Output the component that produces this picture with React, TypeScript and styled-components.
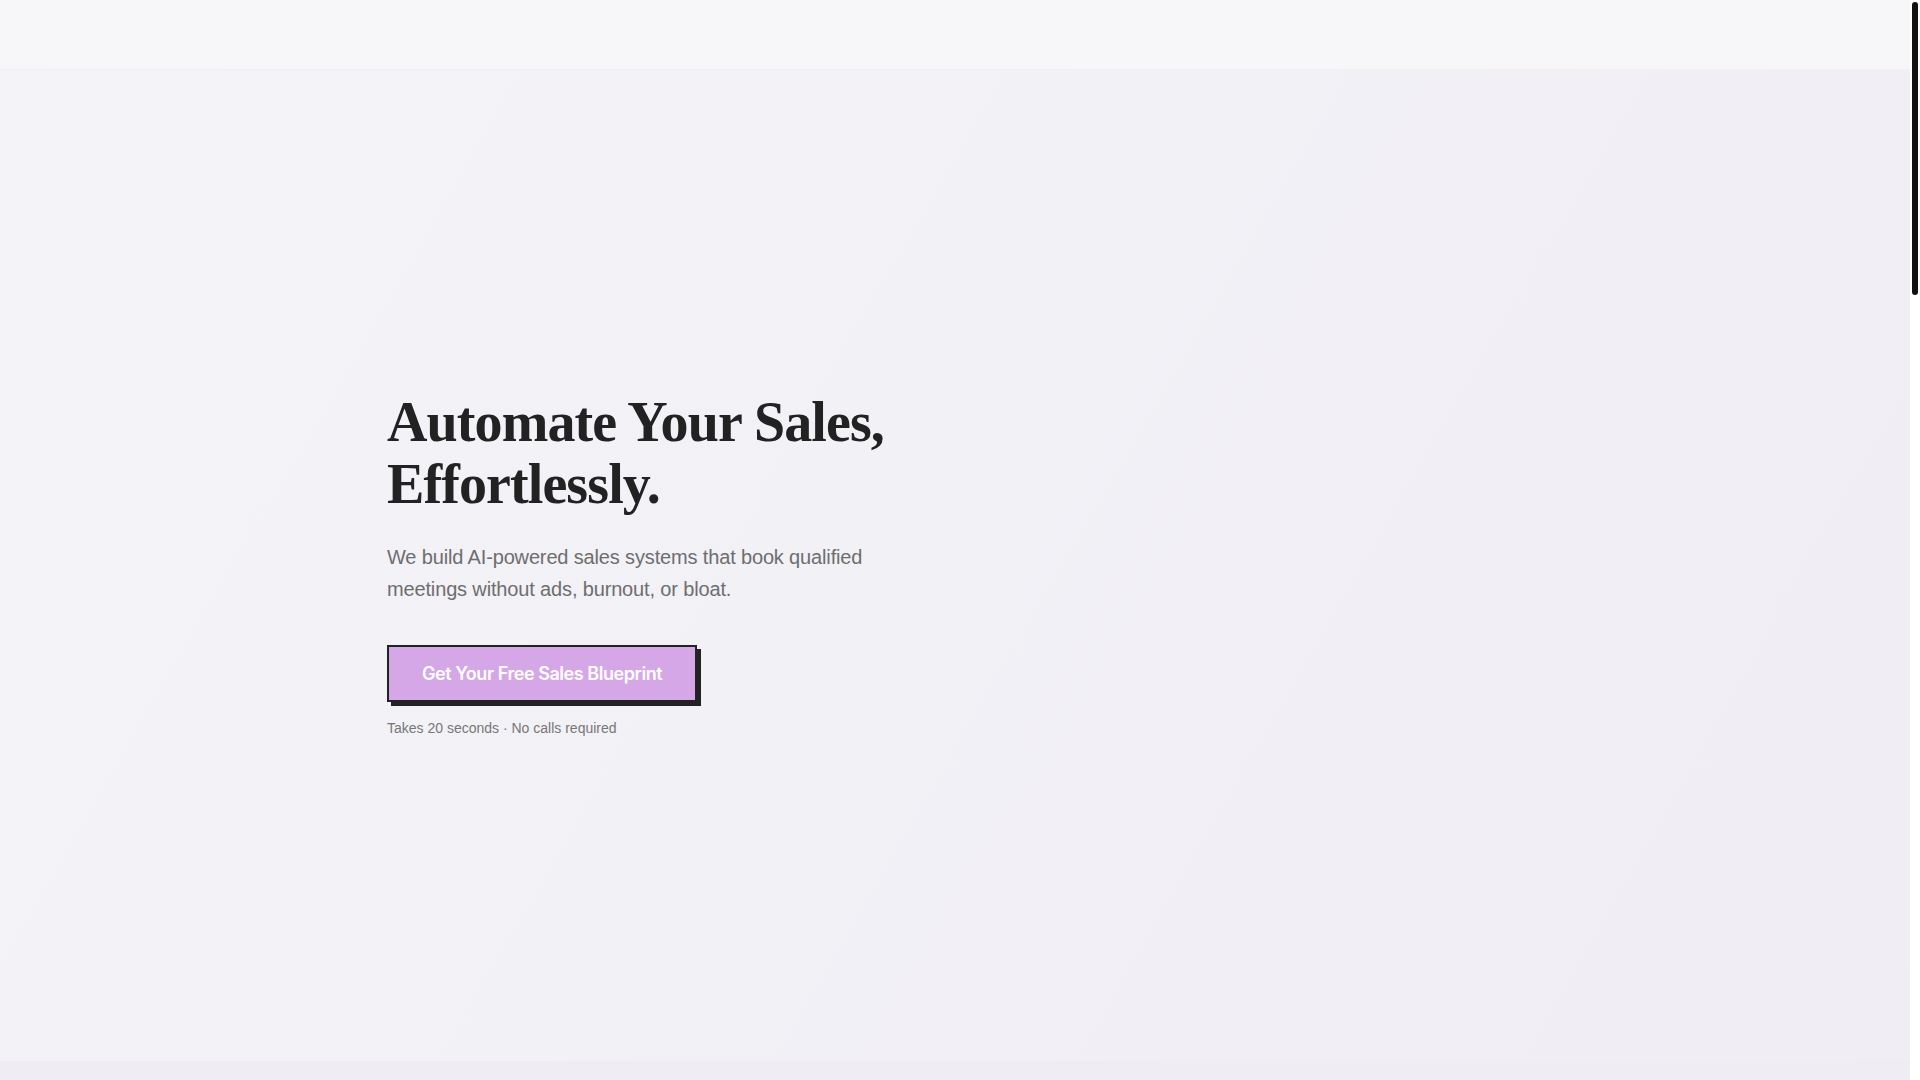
import styled, { createGlobalStyle } from "styled-components";

const GlobalStyle = createGlobalStyle`
  * {
    box-sizing: border-box;
  }
  html,
  body {
    margin: 0;
    padding: 0;
    background: #ffffff;
  }
  body {
    font-family: "Liberation Sans", Arial, sans-serif;
    color: #222222;
  }
`;

const Page = styled.div`
  padding-right: 10px;
`;

const ScrollRail = styled.div`
  position: fixed;
  top: 0;
  right: 0;
  width: 10px;
  height: 100vh;
  background: #ffffff;
  padding: 2px;
`;

const ScrollThumb = styled.div`
  width: 6px;
  height: 293px;
  background: #111111;
  border-radius: 3px;
`;

const Header = styled.header`
  height: 70px;
  background: #f7f7f9;
  border-bottom: 1px solid rgba(20, 20, 40, 0.025);
`;

const Hero = styled.section`
  min-height: 991px;
  display: flex;
  align-items: center;
  background: linear-gradient(120deg, #f4f3f8 0%, #f2f1f6 45%, #f0edf4 100%);
`;

const Container = styled.div`
  width: 100%;
  max-width: 1200px;
  margin: 0 auto;
  padding: 0 32px;
`;

const HeroGrid = styled.div`
  display: grid;
  grid-template-columns: 1fr 1fr;
  gap: 48px;
  align-items: center;
`;

const HeroCopy = styled.div`
  display: flex;
  flex-direction: column;
  align-items: flex-start;
`;

const Title = styled.h1`
  margin: 0 0 25px;
  font-family: "Liberation Serif", "Times New Roman", serif;
  font-weight: 700;
  font-size: 56px;
  line-height: 1.1;
  letter-spacing: -0.9px;
  color: #222222;
`;

const Lead = styled.p`
  margin: 0 0 40px;
  font-family: "Liberation Sans", Arial, sans-serif;
  font-size: 20px;
  line-height: 1.6;
  letter-spacing: -0.15px;
  color: #6e6e6e;
`;

const CtaButton = styled.button`
  font-family: Inter, "Liberation Sans", sans-serif;
  font-weight: 600;
  font-size: 18px;
  line-height: 27px;
  letter-spacing: -0.45px;
  color: #ffffff;
  background: #d6a7e6;
  border: 2px solid #222222;
  padding: 13px 33px;
  box-shadow: 4px 4px 0 #222222;
  cursor: pointer;
`;

const Note = styled.p`
  margin: 16px 0 0;
  font-size: 14px;
  line-height: 21px;
  color: #777777;
`;

const NextSection = styled.section`
  min-height: 2909px;
  background: #efecf3;
`;

const App = () => {
  return (
    <Page>
      <GlobalStyle />
      <Header />
      <Hero>
        <Container>
          <HeroGrid>
            <HeroCopy>
              <Title>Automate Your Sales, Effortlessly.</Title>
              <Lead>
                We build AI-powered sales systems that book qualified meetings
                without ads, burnout, or bloat.
              </Lead>
              <CtaButton>Get Your Free Sales Blueprint</CtaButton>
              <Note>Takes 20 seconds · No calls required</Note>
            </HeroCopy>
            <div />
          </HeroGrid>
        </Container>
      </Hero>
      <NextSection />
      <ScrollRail aria-hidden="true">
        <ScrollThumb />
      </ScrollRail>
    </Page>
  );
};

export default App;
